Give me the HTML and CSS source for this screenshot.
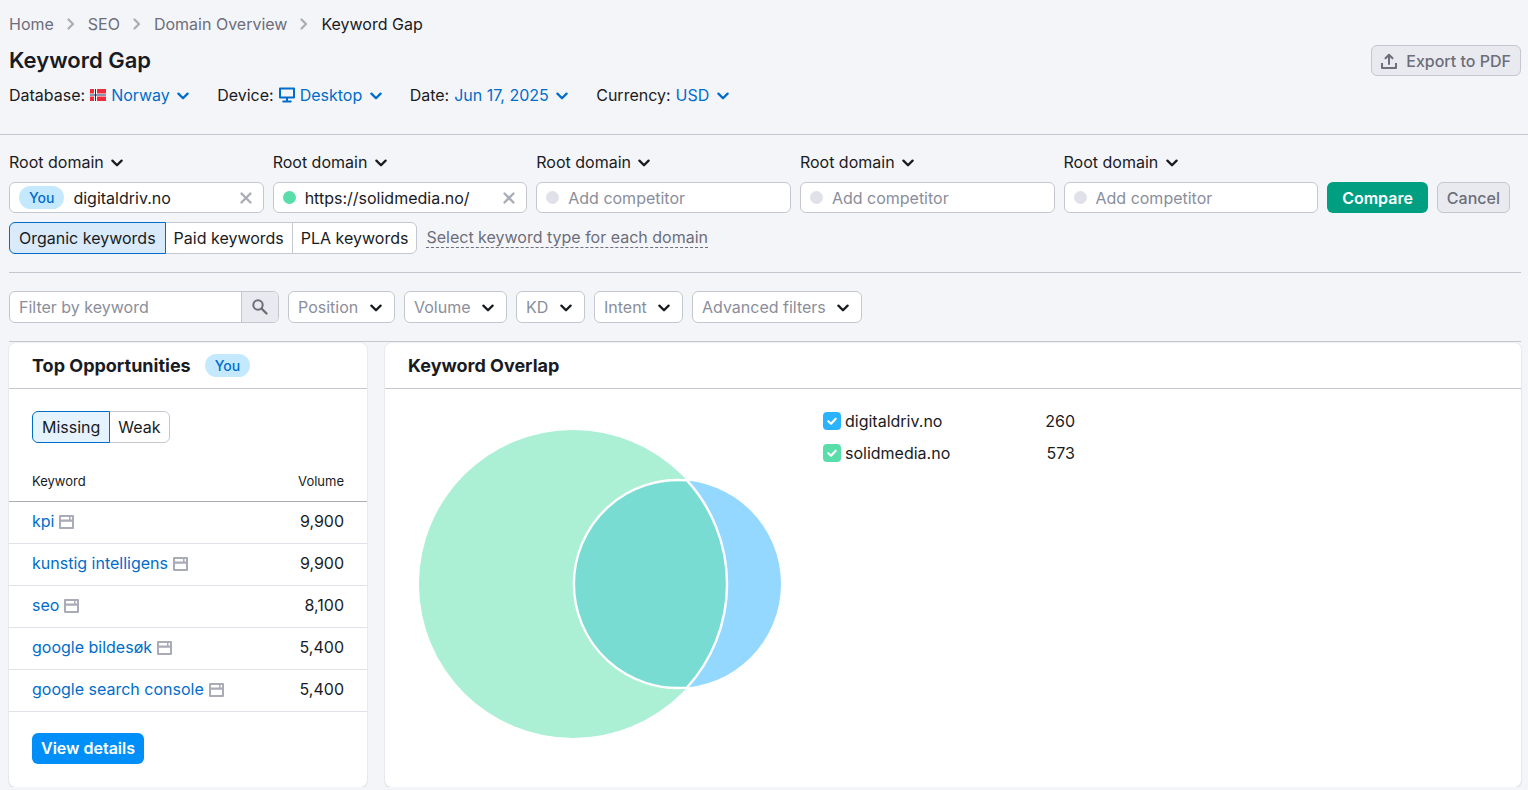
FILE: index.html
```
<!DOCTYPE html>
<html lang="en">
<head>
    <meta charset="UTF-8">
    <meta name="viewport" content="width=device-width, initial-scale=1.0">
    <title>Keyword Gap</title>
    <link rel="stylesheet" href="styles.css">
</head>
<body>
    <!-- shared icons -->
    <svg class="sprite" aria-hidden="true">
        <symbol id="chevron" viewBox="0 0 12 8"><path d="M1.4 1.6 6 6.2l4.6-4.6" fill="none" stroke="currentColor" stroke-width="2.3" stroke-linecap="round" stroke-linejoin="round"/></symbol>
        <symbol id="crumb" viewBox="0 0 8 12"><path d="M1.5 1.5 6 6l-4.5 4.5" fill="none" stroke="currentColor" stroke-width="2.2" stroke-linecap="round" stroke-linejoin="round"/></symbol>
        <symbol id="close" viewBox="0 0 12 12"><path d="M1.5 1.5l9 9M10.5 1.5l-9 9" fill="none" stroke="currentColor" stroke-width="2.3" stroke-linecap="round"/></symbol>
        <symbol id="serp" viewBox="0 0 15 14"><path fill="currentColor" fill-rule="evenodd" d="M1 0h13a1 1 0 0 1 1 1v12a1 1 0 0 1-1 1H1a1 1 0 0 1-1-1V1a1 1 0 0 1 1-1zM2 2v2.500h8V2zM11.500 2v2.500h1.500V2zM2 6.800V12h11V6.800z"/></symbol>
        <symbol id="check" viewBox="0 0 18 18"><path d="M5.3 9.3 8 11.7l4.7-5" fill="none" stroke="#fff" stroke-width="2.2" stroke-linecap="round" stroke-linejoin="round"/></symbol>
    </svg>

    <header class="header">
        <nav class="breadcrumbs">
            <a href="#">Home</a>
            <svg width="8" height="12"><use href="#crumb"/></svg>
            <a href="#">SEO</a>
            <svg width="8" height="12"><use href="#crumb"/></svg>
            <a href="#">Domain Overview</a>
            <svg width="8" height="12"><use href="#crumb"/></svg>
            <span class="current">Keyword Gap</span>
        </nav>
        <div class="title-row">
            <h1>Keyword Gap</h1>
            <button class="btn btn-muted btn-export">
                <svg width="16" height="16" viewBox="0 0 16 16" fill="none" stroke="currentColor" stroke-width="2"><path d="M8 11V2.500M4.500 5.200 8 1.700l3.500 3.500" stroke-linecap="round" stroke-linejoin="round"/><path d="M1 10v5h14v-5" stroke-linejoin="round"/></svg>
                Export to PDF
            </button>
        </div>
        <div class="settings">
            <div class="setting">
                <label for="database">Database:</label>
                <svg class="flag" width="16" height="12" viewBox="0 0 16 12"><path fill="#ef2b3c" d="M0 0h16v12H0z"/><path fill="#fff" d="M4 0h3v12H4zM0 4.500h16v3H0z"/><path fill="#1b2a6b" d="M5 0h1v12H5zM0 5.500h16v1H0z"/></svg>
                <span class="select"><select id="database"><option>Norway</option></select><svg width="12" height="8"><use href="#chevron"/></svg></span>
            </div>
            <div class="setting">
                <label for="device">Device:</label>
                <svg width="16" height="16" viewBox="0 0 16 16"><path d="M1 1.500h14v9H1z" fill="none" stroke="#006dca" stroke-width="2" stroke-linejoin="round"/><path d="M7 11h2v2.500h2.500a1 1 0 0 1 .5 2H4a1 1 0 0 1 .5-2H7z" fill="#006dca"/></svg>
                <span class="select"><select id="device"><option>Desktop</option></select><svg width="12" height="8"><use href="#chevron"/></svg></span>
            </div>
            <div class="setting">
                <label for="date">Date:</label>
                <span class="select"><select id="date"><option>Jun 17, 2025</option></select><svg width="12" height="8"><use href="#chevron"/></svg></span>
            </div>
            <div class="setting">
                <label for="currency">Currency:</label>
                <span class="select"><select id="currency"><option>USD</option></select><svg width="12" height="8"><use href="#chevron"/></svg></span>
            </div>
        </div>
    </header>

    <main class="content">
        <section class="compare">
            <div class="domains">
                <div class="domain">
                    <span class="select"><select aria-label="Scope 1"><option>Root domain</option></select><svg width="12" height="8"><use href="#chevron"/></svg></span>
                    <div class="field">
                        <span class="badge">You</span>
                        <input type="text" aria-label="Your domain" value="digitaldriv.no">
                        <button class="clear" aria-label="Clear"><svg width="12" height="12"><use href="#close"/></svg></button>
                    </div>
                </div>
                <div class="domain">
                    <span class="select"><select aria-label="Scope 2"><option>Root domain</option></select><svg width="12" height="8"><use href="#chevron"/></svg></span>
                    <div class="field">
                        <span class="dot dot-green"></span>
                        <input type="text" aria-label="Competitor 1" value="https://solidmedia.no/">
                        <button class="clear" aria-label="Clear"><svg width="12" height="12"><use href="#close"/></svg></button>
                    </div>
                </div>
                <div class="domain">
                    <span class="select"><select aria-label="Scope 3"><option>Root domain</option></select><svg width="12" height="8"><use href="#chevron"/></svg></span>
                    <div class="field">
                        <span class="dot"></span>
                        <input type="text" aria-label="Competitor 2" placeholder="Add competitor">
                    </div>
                </div>
                <div class="domain">
                    <span class="select"><select aria-label="Scope 4"><option>Root domain</option></select><svg width="12" height="8"><use href="#chevron"/></svg></span>
                    <div class="field">
                        <span class="dot"></span>
                        <input type="text" aria-label="Competitor 3" placeholder="Add competitor">
                    </div>
                </div>
                <div class="domain">
                    <span class="select"><select aria-label="Scope 5"><option>Root domain</option></select><svg width="12" height="8"><use href="#chevron"/></svg></span>
                    <div class="field">
                        <span class="dot"></span>
                        <input type="text" aria-label="Competitor 4" placeholder="Add competitor">
                    </div>
                </div>
                <button class="btn btn-compare">Compare</button>
                <button class="btn btn-muted">Cancel</button>
            </div>
            <div class="types">
                <div class="pills">
                    <button class="active">Organic keywords</button>
                    <button>Paid keywords</button>
                    <button>PLA keywords</button>
                </div>
                <a class="type-link" href="#">Select keyword type for each domain</a>
            </div>
        </section>

        <section class="filters">
            <div class="search">
                <input type="text" aria-label="Filter by keyword" placeholder="Filter by keyword">
                <button aria-label="Search"><svg width="18" height="18" viewBox="0 0 18 18" fill="none" stroke="currentColor"><circle cx="7" cy="7" r="4.700" stroke-width="2"/><path d="M10.500 10.500l5 5" stroke-width="2.400" stroke-linecap="round"/></svg></button>
            </div>
            <span class="select boxed"><select aria-label="Position"><option>Position</option></select><svg width="12" height="8"><use href="#chevron"/></svg></span>
            <span class="select boxed"><select aria-label="Volume"><option>Volume</option></select><svg width="12" height="8"><use href="#chevron"/></svg></span>
            <span class="select boxed"><select aria-label="KD"><option>KD</option></select><svg width="12" height="8"><use href="#chevron"/></svg></span>
            <span class="select boxed"><select aria-label="Intent"><option>Intent</option></select><svg width="12" height="8"><use href="#chevron"/></svg></span>
            <span class="select boxed"><select aria-label="Advanced filters"><option>Advanced filters</option></select><svg width="12" height="8"><use href="#chevron"/></svg></span>
        </section>

        <div class="cards">
            <section class="card">
                <div class="card-head">
                    <h2>Top Opportunities</h2>
                    <span class="badge">You</span>
                </div>
                <div class="pills tabs">
                    <button class="active">Missing</button>
                    <button>Weak</button>
                </div>
                <table class="keywords">
                    <thead>
                        <tr><th>Keyword</th><th>Volume</th></tr>
                    </thead>
                    <tbody>
                        <tr><td><a href="#">kpi</a><svg width="15" height="14"><use href="#serp"/></svg></td><td>9,900</td></tr>
                        <tr><td><a href="#">kunstig intelligens</a><svg width="15" height="14"><use href="#serp"/></svg></td><td>9,900</td></tr>
                        <tr><td><a href="#">seo</a><svg width="15" height="14"><use href="#serp"/></svg></td><td>8,100</td></tr>
                        <tr><td><a href="#">google bildesøk</a><svg width="15" height="14"><use href="#serp"/></svg></td><td>5,400</td></tr>
                        <tr><td><a href="#">google search console</a><svg width="15" height="14"><use href="#serp"/></svg></td><td>5,400</td></tr>
                    </tbody>
                </table>
                <button class="btn btn-details">View details</button>
            </section>

            <section class="card">
                <div class="card-head">
                    <h2>Keyword Overlap</h2>
                </div>
                <div class="overlap">
                    <svg class="venn" width="364" height="310" viewBox="0 0 364 310">
                        <circle cx="155" cy="155" r="154" fill="#abefd5"/>
                        <circle cx="259" cy="155" r="104" fill="#95d8ff"/>
                        <!-- shared keywords -->
                        <path d="M269 51.400A154 154 0 0 1 269 258.600A104 104 0 1 1 269 51.400z" fill="#78dcd3" stroke="#fff" stroke-width="2.400"/>
                    </svg>
                    <div class="legend">
                        <div class="legend-row">
                            <label><span class="check check-blue"><input type="checkbox" checked><svg width="18" height="18"><use href="#check"/></svg></span>digitaldriv.no</label>
                            <span>260</span>
                        </div>
                        <div class="legend-row">
                            <label><span class="check check-green"><input type="checkbox" checked><svg width="18" height="18"><use href="#check"/></svg></span>solidmedia.no</label>
                            <span>573</span>
                        </div>
                    </div>
                </div>
            </section>
        </div>
    </main>
</body>
</html>
```
FILE: styles.css
```
* {
    margin: 0;
    padding: 0;
    box-sizing: border-box;
}

body {
    background: #f4f5f9;
    color: #191b23;
    font-family: Inter, sans-serif;
    font-size: 16px;
    line-height: 20px;
}

button,
input,
select {
    font: inherit;
    color: inherit;
    border: none;
    background: none;
    outline: none;
}

button,
select {
    cursor: pointer;
}

a {
    color: #006dca;
    text-decoration: none;
}

svg {
    flex: none;
}

.sprite {
    position: absolute;
    width: 0;
    height: 0;
}

/* header */
.header {
    padding: 14px 7px 29px 9px;
    border-bottom: 1px solid #c4c7cf;
}

.breadcrumbs {
    display: flex;
    align-items: center;
    gap: 13px;
    color: #a9abb6;
}

.breadcrumbs a {
    color: #6c6e79;
}

.breadcrumbs .current {
    color: #191b23;
}

.title-row {
    display: flex;
    justify-content: space-between;
    align-items: center;
    margin-top: 11px;
}

h1 {
    font-size: 22px;
    line-height: 31px;
    font-weight: 600;
}

.settings {
    display: flex;
    gap: 28px;
    margin-top: 9px;
}

.setting {
    display: flex;
    align-items: center;
    gap: 5px;
}

.setting .select {
    color: #006dca;
}

/* select with its own arrow laid over the right edge */
.select {
    display: inline-grid;
    align-items: center;
    justify-self: start;
}

.select select {
    grid-area: 1 / 1;
    appearance: none;
    padding-right: 19px;
}

.select svg {
    grid-area: 1 / 1;
    justify-self: end;
    margin-top: 2px;
    pointer-events: none;
}

.boxed {
    height: 32px;
    border: 1px solid #c4c7cf;
    border-radius: 6px;
    background: #fff;
}

.boxed select {
    height: 30px;
    padding: 0 35px 0 9px;
    color: #8a8e9b;
}

.boxed svg {
    margin-right: 12px;
}

/* buttons */
.btn {
    display: flex;
    align-items: center;
    height: 31px;
    padding: 0 9px;
    border: 1px solid transparent;
    border-radius: 6px;
    font-weight: 500;
}

.btn-muted {
    background: #e9eaf0;
    border-color: #c4c7cf;
    color: #6c6e79;
}

.btn-export {
    gap: 9px;
}

.btn-compare {
    padding: 0 14px;
    background: #009f81;
    color: #fff;
    font-weight: 600;
}

.btn-details {
    margin: 21px 23px 23px;
    padding: 0 8px;
    background: #008ff8;
    color: #fff;
    font-weight: 600;
}

.badge {
    padding: 0 10px;
    border-radius: 12px;
    background: #c4e9ff;
    color: #006dca;
    font-size: 14px;
    line-height: 23px;
    font-weight: 500;
}

/* domains */
.content {
    padding: 0 7px 0 9px;
}

.compare {
    padding: 17px 0 18px;
    border-bottom: 1px solid #c4c7cf;
}

.domains {
    display: flex;
    align-items: flex-end;
    gap: 9px;
    padding-right: 11px;
}

.domain {
    display: grid;
    grid-template-columns: minmax(0, 1fr);
    gap: 10px;
    flex: 1;
    min-width: 0;
}

.field {
    display: flex;
    align-items: center;
    gap: 9px;
    height: 31px;
    padding: 0 9px;
    border: 1px solid #c4c7cf;
    border-radius: 6px;
    background: #fff;
}

.field input {
    flex: 1;
    min-width: 0;
}

::placeholder {
    color: #8a8e9b;
    opacity: 1;
}

.clear {
    display: flex;
    padding: 2px;
    color: #a9abb6;
}

.dot {
    width: 13px;
    height: 13px;
    border-radius: 50%;
    background: #e0e1e9;
}

.dot-green {
    background: #59ddaa;
}

.types {
    display: flex;
    align-items: center;
    gap: 9px;
    margin-top: 9px;
}

.pills {
    display: flex;
}

.pills button {
    height: 32px;
    padding: 0 8px;
    margin-left: -1px;
    border: 1px solid #c4c7cf;
    background: #fff;
}

.pills button:first-child {
    margin-left: 0;
    border-radius: 6px 0 0 6px;
}

.pills button:last-child {
    border-radius: 0 6px 6px 0;
}

.pills .active {
    position: relative;
    padding: 0 9px;
    border-color: #006dca;
    background: #d9eafa;
}

.type-link {
    color: #6c6e79;
    border-bottom: 1px dashed #6c6e79;
    line-height: 19px;
}

/* filters */
.filters {
    display: flex;
    gap: 9px;
    padding: 18px 0;
    border-bottom: 1px solid #c4c7cf;
}

.search {
    display: flex;
    width: 270px;
    height: 32px;
    border: 1px solid #c4c7cf;
    border-radius: 6px;
    background: #fff;
    overflow: hidden;
}

.search input {
    flex: 1;
    min-width: 0;
    padding: 0 9px;
}

.search button {
    display: flex;
    align-items: center;
    justify-content: center;
    width: 37px;
    border-left: 1px solid #c4c7cf;
    background: #e9eaf0;
    color: #6c6e79;
}

/* cards */
.cards {
    display: grid;
    grid-template-columns: 358px 1fr;
    gap: 18px;
    margin-top: 1px;
}

.card {
    border-radius: 6px;
    background: #fff;
    box-shadow: 0 0 1px rgba(25, 27, 35, 0.16), 0 1px 2px rgba(25, 27, 35, 0.12);
}

.card-head {
    display: flex;
    align-items: center;
    gap: 14px;
    height: 46px;
    padding: 0 23px;
    border-bottom: 1px solid #c4c7cf;
}

h2 {
    font-size: 18px;
    line-height: 24px;
    font-weight: 700;
}

.tabs {
    margin: 22px 23px 0;
}

.tabs .active {
    background: #e5f3ff;
}

.keywords {
    width: 100%;
    margin-top: 19px;
    border-collapse: collapse;
}

.keywords th {
    height: 39px;
    border-bottom: 1px solid #a9abb6;
    font-size: 13px;
    font-weight: 400;
    text-align: left;
}

.keywords td {
    height: 42px;
    padding-bottom: 2px;
    border-bottom: 1px solid #e0e1e9;
}

.keywords th:first-child,
.keywords td:first-child {
    padding-left: 23px;
}

.keywords th:last-child,
.keywords td:last-child {
    padding-right: 23px;
    text-align: right;
}

.keywords svg {
    margin-left: 5px;
    color: #a9abb6;
    vertical-align: -2px;
}

.overlap {
    display: flex;
    gap: 41px;
    padding: 22px 33px;
}

.venn {
    margin-top: 18px;
}

.legend {
    display: grid;
    align-content: start;
    gap: 12px;
    width: 252px;
}

.legend-row {
    display: flex;
    justify-content: space-between;
}

.legend label {
    display: flex;
    align-items: center;
    gap: 4px;
}

.check {
    display: grid;
}

.check input {
    grid-area: 1 / 1;
    appearance: none;
    width: 18px;
    height: 18px;
    border-radius: 4px;
}

.check svg {
    grid-area: 1 / 1;
    pointer-events: none;
}

.check-blue input {
    background: #2bb3ff;
}

.check-green input {
    background: #59ddaa;
}
```
